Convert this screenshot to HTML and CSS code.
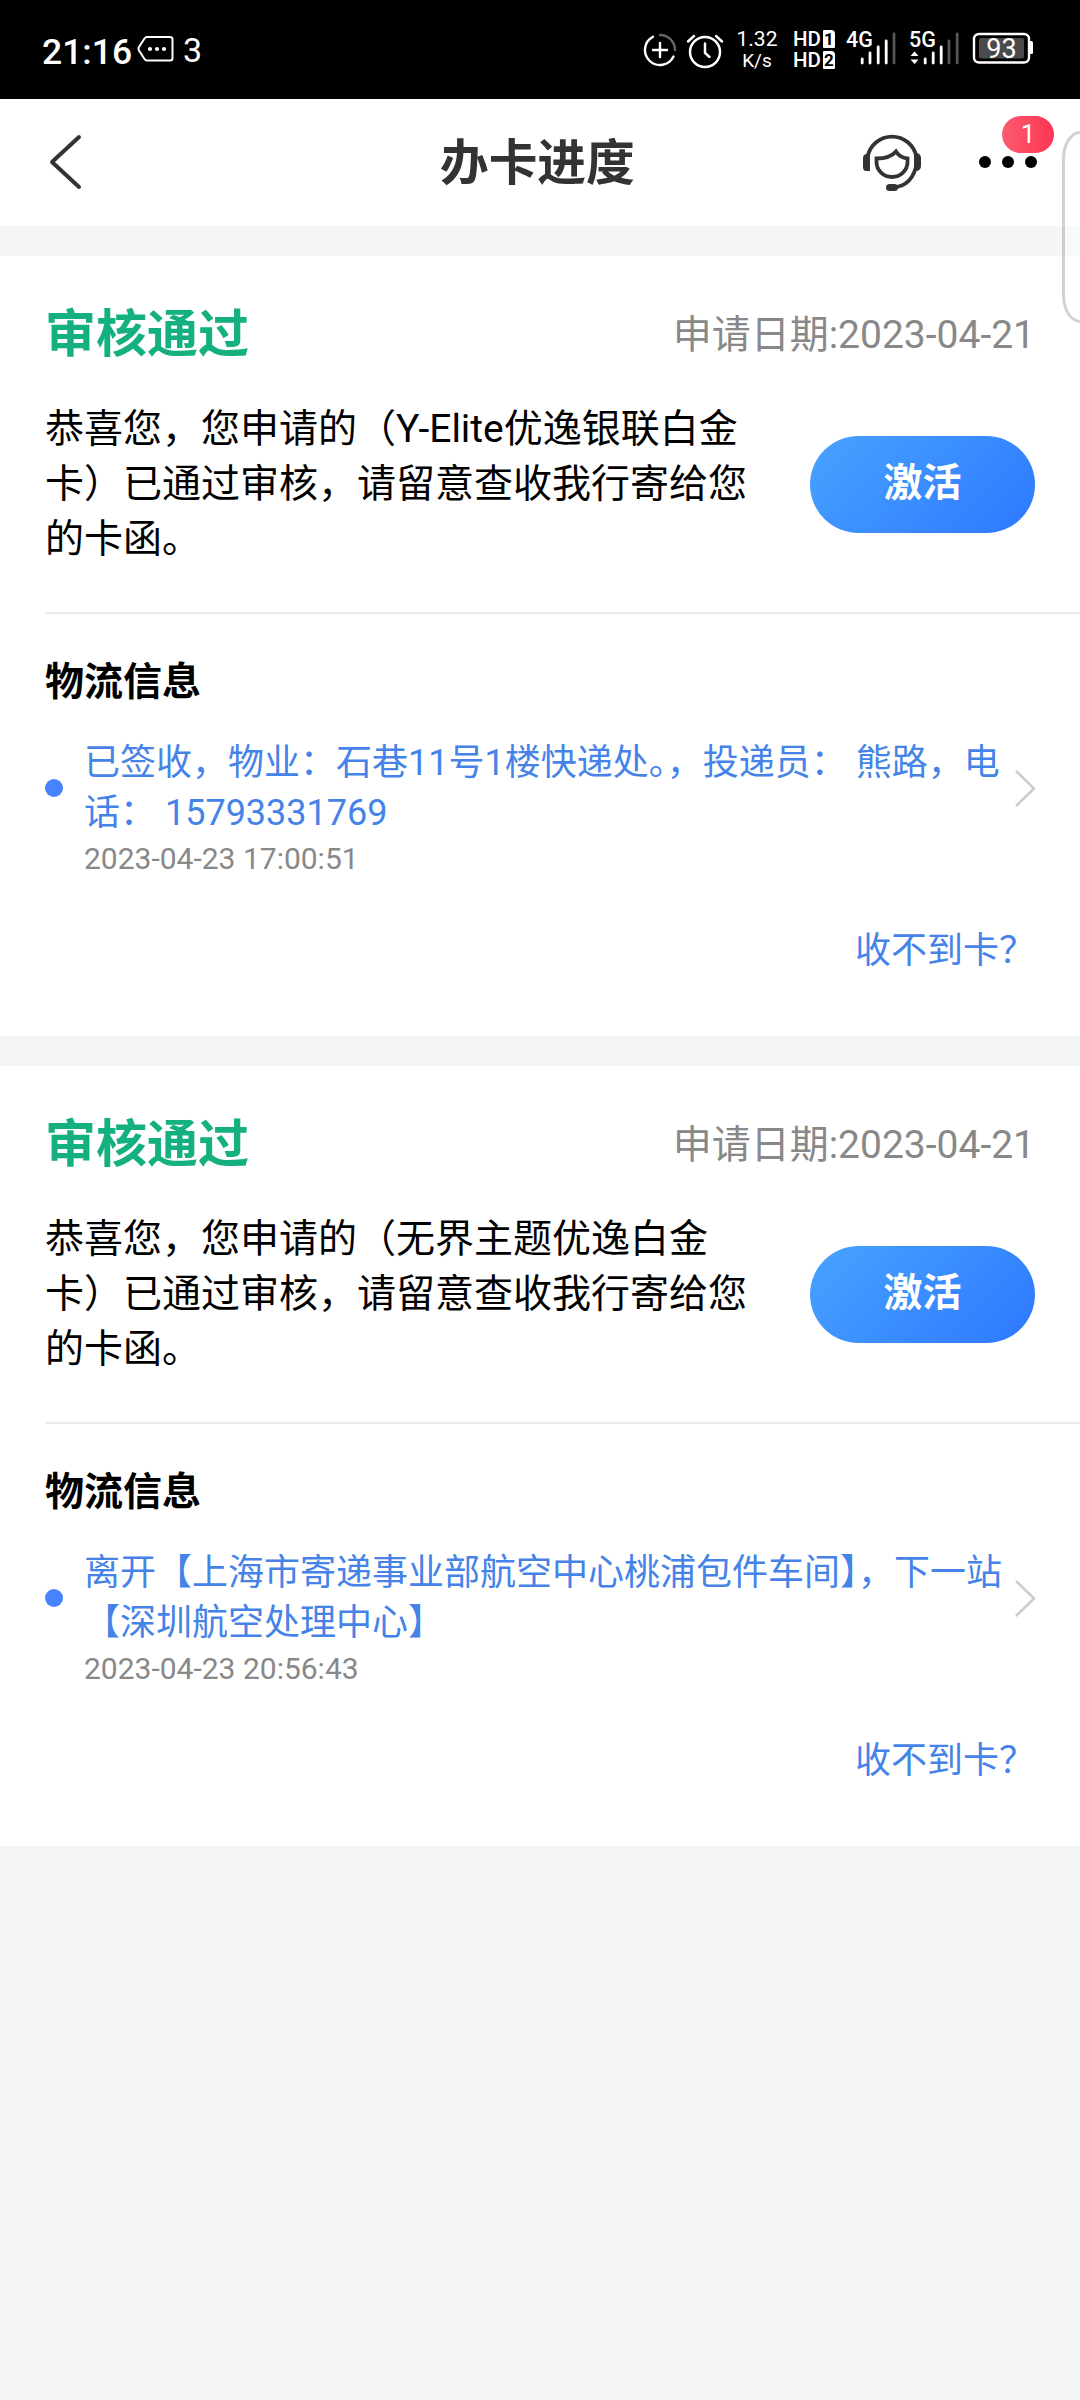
FILE: index.html
```
<!DOCTYPE html>
<html lang="zh-CN">
<head>
<meta charset="utf-8">
<title>办卡进度</title>
<link rel="stylesheet" href="styles.css">
</head>
<body>
<header class="status">
  <span class="time">21:16</span>
  <svg class="msg" width="38" height="28" viewBox="0 0 38 28" fill="none" stroke="#fff" stroke-width="2"><path d="M10 2H33Q35.500 2 35.500 4.500V23Q35.500 25.500 33 25.500H10Q8.500 25.500 7.500 24L2 15.500Q1 13.700 2 12L7.500 3.500Q8.500 2 10 2Z"/><g fill="#fff" stroke="none"><circle cx="13" cy="14" r="2.100"/><circle cx="20" cy="14" r="2.100"/><circle cx="27" cy="14" r="2.100"/></g></svg>
  <span class="count">3</span>
  <svg class="saver" width="34" height="34" viewBox="0 0 34 34" fill="none" stroke="#fff" stroke-width="2.400" stroke-linecap="round"><path d="M10 3.700A15 15 0 1 0 30.500 23.500M17 10V24M10 17H24"/><path d="M17 2A15 15 0 0 1 32 17" stroke="#666"/></svg>
  <svg class="alarm" width="38" height="36" viewBox="0 0 38 36" fill="none" stroke="#fff" stroke-width="2.500" stroke-linecap="round"><circle cx="19" cy="19" r="15"/><path d="M19 10.500V20L23.500 24M2 8.500L8 3M30 3L36 8.500"/></svg>
  <span class="speed"><b>1.32</b><i>K/s</i></span>
  <span class="hd"><span>HD<em>1</em></span><span>HD<em>2</em></span></span>
  <svg class="cell" width="52" height="40" viewBox="0 0 52 40" stroke="#fff" stroke-width="2.800" stroke-linecap="round"><text x="0" y="19" class="net">4G</text><path d="M16.200 31V35M24 25V35M32.200 19V35M40.200 13V35"/><path d="M48 6V35" stroke="#555"/></svg>
  <svg class="cell five" width="52" height="40" viewBox="0 0 52 40" stroke="#fff" stroke-width="2.800" stroke-linecap="round"><text x="0" y="19" class="net">5G</text><path d="M16.200 31V35M24.200 25V35M32.200 19V35"/><path d="M40 13V35M48.200 6V35" stroke="#555"/><path d="M5.500 23.500L9.500 28H1.500ZM5.500 36L9.500 31.500H1.500Z" fill="#fff" stroke="none"/></svg>
  <svg class="battery" width="62" height="32" viewBox="0 0 62 32"><rect x="2" y="2" width="55" height="28.500" rx="5" fill="none" stroke="#fff" stroke-width="2.400"/><path d="M58 9h1.500q1.500 0 1.500 1.500v10q0 1.500-1.500 1.500H58Z" fill="#fff"/><rect x="7" y="6" width="45" height="20.500" rx="2" fill="#4a4a4a"/><text x="29.500" y="26" text-anchor="middle" class="level">93</text></svg>
</header>

<nav class="nav">
  <svg class="back" width="34" height="56" viewBox="0 0 34 56" fill="none" stroke="#333" stroke-width="4" stroke-linecap="round" stroke-linejoin="round"><path d="M31 3L4 28L31 53"/></svg>
  <h1>办卡进度</h1>
  <svg class="service" width="58" height="58" viewBox="0 0 58 58" fill="none" stroke="#333" stroke-width="3.800" stroke-linejoin="round"><path d="M4.500 24A25 25.500 0 0 1 53.500 24V31Q50 52 31 54.500"/><path d="M13.500 25.500C21 25.500 28 24.500 33 18.500C35.500 22.500 39.500 25 44.500 25.500V29A15.500 15 0 0 1 13.500 29Z" stroke-linejoin="miter"/><g fill="#333" stroke="none"><path d="M7 20V38H3Q0 38 0 34V25Q0 22 3 21ZM51 20V38H54Q58 37 58 33V25Q58 21 54 20Z"/><rect x="23" y="51" width="12" height="7" rx="3.500"/></g></svg>
  <div class="more"><span></span><span></span><span></span><div class="badge">1</div></div>
  <div class="side-panel"></div>
</nav>

<main>
  <section class="card">
    <div class="head"><h2>审核通过</h2><span class="date">申请日期:2023-04-21</span></div>
    <div class="result"><p>恭喜您，您申请的（Y-Elite优逸银联白金卡）已通过审核，请留意查收我行寄给您的卡函。</p><a class="activate">激活</a></div>
    <div class="logistics">
      <h3>物流信息</h3>
      <div class="track">
        <span class="dot"></span>
        <p>已签收，物业：石巷11号1楼快递处。，投递员： 熊路，电话： 15793331769</p>
        <svg width="22" height="38" viewBox="0 0 22 38" fill="none" stroke="#ccc" stroke-width="2.500"><path d="M2 2L20 19.500L2 37"/></svg>
      </div>
      <time>2023-04-23 17:00:51</time>
      <a class="missing">收不到卡？</a>
    </div>
  </section>

  <section class="card">
    <div class="head"><h2>审核通过</h2><span class="date">申请日期:2023-04-21</span></div>
    <div class="result"><p>恭喜您，您申请的（无界主题优逸白金卡）已通过审核，请留意查收我行寄给您的卡函。</p><a class="activate">激活</a></div>
    <div class="logistics">
      <h3>物流信息</h3>
      <div class="track">
        <span class="dot"></span>
        <p>离开【上海市寄递事业部航空中心桃浦包件车间】，下一站【深圳航空处理中心】</p>
        <svg width="22" height="38" viewBox="0 0 22 38" fill="none" stroke="#ccc" stroke-width="2.500"><path d="M2 2L20 19.500L2 37"/></svg>
      </div>
      <time>2023-04-23 20:56:43</time>
      <a class="missing">收不到卡？</a>
    </div>
  </section>
</main>
</body>
</html>
```
FILE: styles.css
```
* { box-sizing: border-box; margin: 0; padding: 0; }
body {
  width: 1080px;
  min-height: 2400px;
  background: #f4f5f7;
  color: #000;
  font-family: Roboto, "Noto Sans CJK SC", sans-serif;
}
svg { display: block; flex: none; }

.status {
  height: 99px;
  background: #000;
  color: #fff;
  display: flex;
  align-items: flex-start;
  padding-left: 42px;
}
.time { font-size: 35.500px; font-weight: 500; line-height: 42px; margin-top: 31px; width: 95px; white-space: nowrap; }
.msg { margin-top: 35px; }
.count { font-size: 34px; line-height: 40px; margin: 30px 0 0 8px; width: 20px; }
.saver { margin: 33px 0 0 440px; }
.alarm { margin: 33px 0 0 9px; }
.speed { margin: 29px 0 0 10px; width: 46px; display: flex; flex-direction: column; align-items: center; }
.speed b { font-weight: 400; font-size: 21px; line-height: 21px; }
.speed i { font-style: normal; font-size: 19px; line-height: 21px; }
.hd { margin: 30px 0 0 13px; display: flex; flex-direction: column; gap: 3px; width: 43px; font-size: 20.500px; font-weight: 500; line-height: 18px; }
.hd > span { display: flex; align-items: center; gap: 2px; }
.hd em { font-style: normal; font-weight: 700; font-size: 17px; line-height: 18px; width: 12px; text-align: center; color: #000; background: #fff; border-radius: 1px 4px 1px 1px; }
.cell { margin: 28px 0 0 10px; }
.cell.five { margin-left: 11px; }
.net { font-size: 21.500px; font-weight: 500; fill: #fff; stroke: none; }
.battery { margin: 32px 0 0 11px; }
.level { font-size: 27px; fill: #fff; }

.nav {
  position: relative;
  height: 127px;
  background: #fff;
  display: grid;
  grid-template-columns: 82px 1fr 58px 159px;
  align-items: center;
  padding-bottom: 2px;
}
.back { justify-self: end; }
.nav h1 { font-size: 48.700px; line-height: 72px; color: #333; padding: 4px 0 0 358px; white-space: nowrap; }
.more { position: relative; display: flex; gap: 11px; padding-left: 58px; }
.more span { width: 12px; height: 12px; border-radius: 50%; background: #000; }
.badge {
  position: absolute;
  left: 81px;
  top: -40px;
  width: 52px;
  height: 37px;
  border-radius: 19px;
  background: linear-gradient(90deg, #fc5b70, #fc3553);
  color: #fff;
  font-size: 26px;
  line-height: 37px;
  text-align: center;
}
.side-panel {
  position: absolute;
  left: 1062px;
  top: 32px;
  width: 18px;
  height: 192px;
  border: 3px solid rgba(0, 0, 0, .18);
  border-right: 0;
  border-radius: 18px 0 0 18px / 28px 0 0 28px;
  background: rgba(255, 255, 255, .4);
  z-index: 1;
}

main { display: flex; flex-direction: column; gap: 30px; padding-top: 30px; }
.card { height: 780px; background: #fff; padding-left: 45px; }
.head { display: flex; justify-content: space-between; align-items: center; height: 157px; padding-right: 45px; }
.head h2 { font-size: 51px; line-height: 76px; color: #15b080; }
.date { font-size: 39px; line-height: 58px; color: #888; }
.result { display: flex; align-items: center; justify-content: space-between; height: 201px; padding: 0 45px 57px 0; border-bottom: 2px solid #ebebeb; }
.result p { width: 710px; font-size: 39px; line-height: 55px; }
.activate {
  width: 225px;
  height: 97px;
  border-radius: 49px;
  background: linear-gradient(135deg, #48a3ff, #2d78ff);
  color: #fff;
  font-size: 39px;
  font-weight: 700;
  line-height: 95px;
  text-align: center;
}
.logistics { display: flex; flex-direction: column; padding-right: 45px; }
.logistics h3 { font-size: 39px; line-height: 58px; margin-top: 39px; }
.track { display: flex; align-items: center; margin-top: 27px; }
.dot { width: 18px; height: 18px; border-radius: 50%; background: #4583ff; flex: none; }
.track p { width: 923px; margin-left: 21px; font-size: 36px; line-height: 50px; color: #4583e8; }
.track svg { margin-left: 9px; margin-right: -1px; }
.logistics time { font-size: 30px; line-height: 42px; color: #888; margin-left: 39px; }
.missing { font-size: 36px; line-height: 54px; color: #4583e8; align-self: flex-end; margin-top: 44px; }
```
